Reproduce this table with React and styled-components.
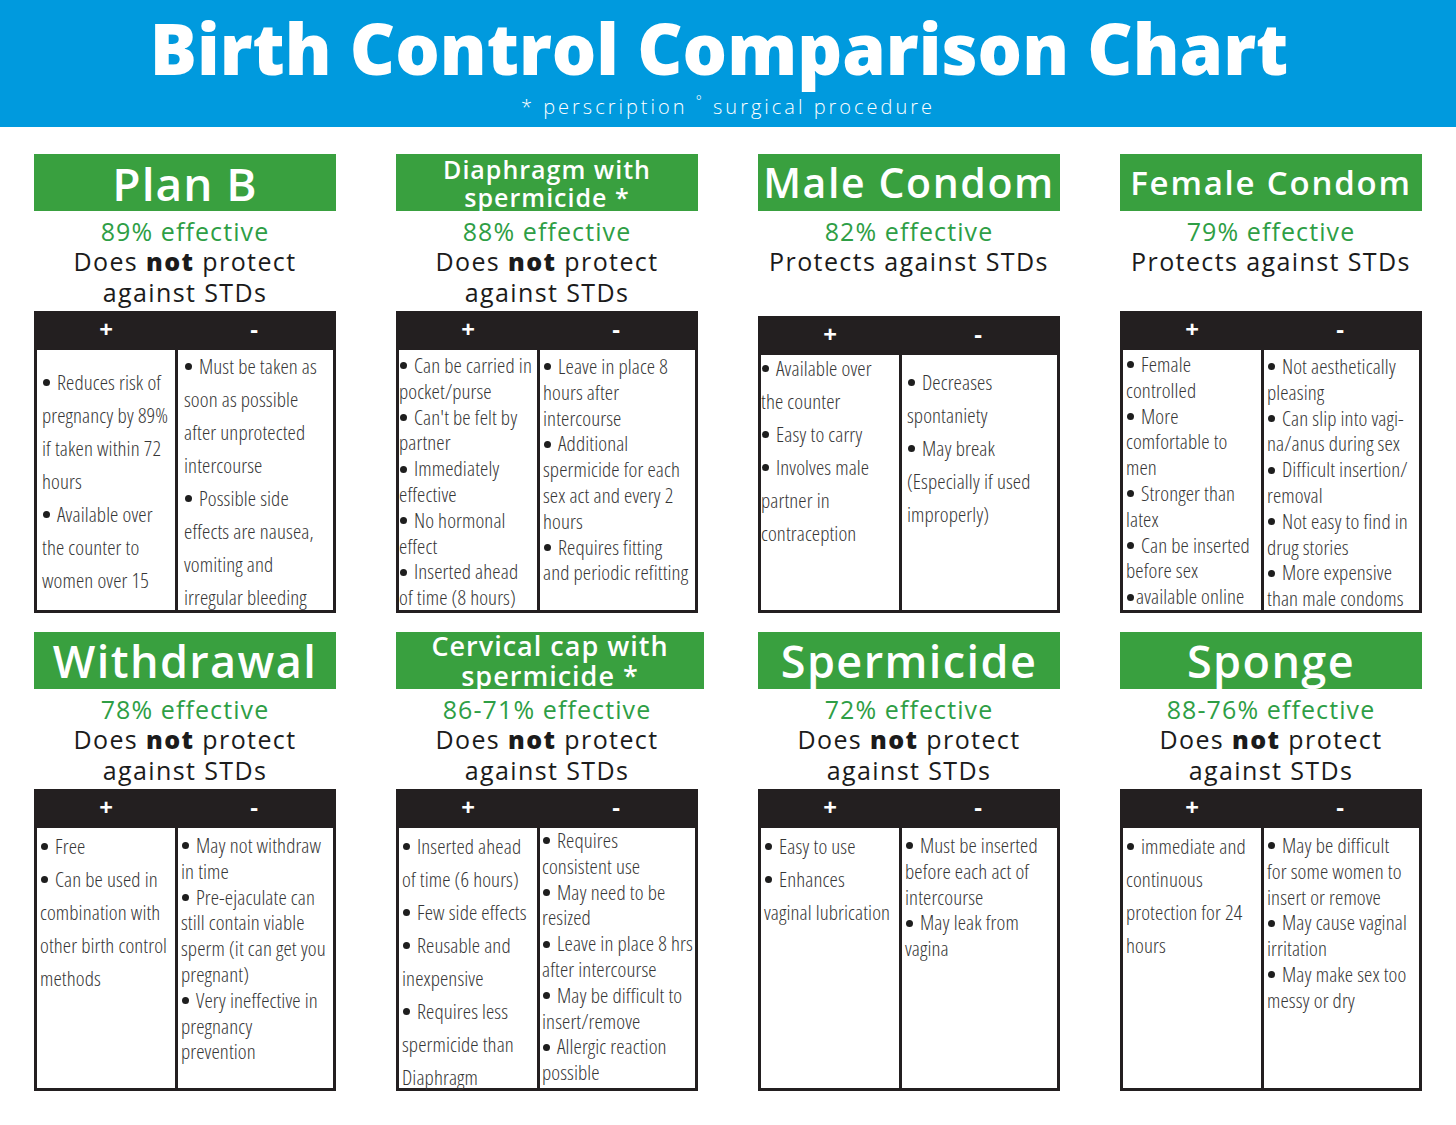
import styled, { createGlobalStyle } from 'styled-components'

const Global = createGlobalStyle`
  body {
    margin: 0;
    background: #ffffff;
    font-family: "Open Sans", "Liberation Sans", sans-serif;
  }
`

const Page = styled.div`
  width: 1456px;
  min-height: 1125px;
  background: #ffffff;
`

const Header = styled.header`
  height: 127px;
  background: #009ade;
  display: flex;
  flex-direction: column;
  align-items: center;
  color: #ffffff;
`

const Title = styled.h1`
  margin: 0 18px 0 0;
  font-size: 70px;
  line-height: 96px;
  font-weight: 800;
  letter-spacing: 0;
`

const Subtitle = styled.div`
  font-size: 20px;
  line-height: 22px;
  font-weight: 300;
  letter-spacing: 3px;

  sup {
    font-size: 14px;
    line-height: 0;
  }
`

const Grid = styled.main`
  display: grid;
  grid-template-columns: repeat(4, 302px);
  column-gap: 60px;
  row-gap: 19px;
  justify-content: center;
  padding-top: 27px;
`

const Card = styled.section`
  display: flex;
  flex-direction: column;
  height: 459px;
`

const TitleBar = styled.h2`
  margin: 0 ${p => p.$grow ? -6 : 0}px 0 0;
  height: 57px;
  flex: none;
  background: #39a03f;
  color: #ffffff;
  display: flex;
  align-items: center;
  justify-content: center;
  text-align: center;
  font-size: ${p => p.$size}px;
  line-height: ${p => p.$lh || p.$size}px;
  font-weight: 600;
  letter-spacing: ${p => p.$ls ?? 1}px;
`

const TitleText = styled.span`
  white-space: pre-line;
`

const Info = styled.div`
  height: 100px;
  flex: none;
  display: flex;
  flex-direction: column;
  align-items: center;
  padding-top: 5px;
  box-sizing: border-box;
`

const Effective = styled.div`
  color: #2e9e45;
  font-size: 25px;
  line-height: 30px;
  letter-spacing: 1.1px;
`

const Protect = styled.div`
  color: #1b1b1b;
  font-size: 25px;
  line-height: 31px;
  text-align: center;
  letter-spacing: 1.4px;
  white-space: pre-line;

  b {
    font-weight: 800;
  }
`

const Table = styled.div`
  flex: 1;
  margin-top: ${p => p.$offset || 0}px;
  display: flex;
  flex-direction: column;
  border: 3px solid #231f20;
  min-height: 0;
`

const TableHead = styled.div`
  height: 36px;
  flex: none;
  box-sizing: border-box;
  padding-bottom: 6px;
  background: #231f20;
  display: grid;
  grid-template-columns: 138px 1fr;
  align-items: center;
  color: #ffffff;
  font-size: 24px;
  line-height: 30px;
  font-weight: 700;
  text-align: center;
`

const TableBody = styled.div`
  flex: 1;
  min-height: 0;
  display: grid;
  grid-template-columns: 138px 1fr;
  grid-template-rows: minmax(0, 1fr);
  overflow: ${p => p.$clip ? 'hidden' : 'visible'};
`

const Column = styled.div`
  padding: ${p => p.$top || 0}px 0 0 ${p => p.$left ?? 3}px;
  margin-top: ${p => p.$shift || 0}px;
  font-family: "Open Sans", "Roboto Condensed", sans-serif;
  font-stretch: semi-condensed;
  font-weight: 300;
  font-size: 21px;
  letter-spacing: 0.1px;
  line-height: ${p => p.$loose ? 33 : 25.8}px;
  color: #363636;
  white-space: pre;

  & + & {
    border-left: 3px solid #231f20;
  }
`

const Item = styled.div``

const Bullet = styled.span`
  display: inline-block;
  width: 7px;
  height: 7px;
  border-radius: 50%;
  background: #1e1e1e;
  vertical-align: middle;
  margin: 0 ${p => p.$tight ? 2 : 7}px 3px 1px;
`

const methods = [
  {
    name: 'Plan B', size: 46, effective: '89% effective', protects: false, clip: true,
    plus: { loose: true, top: 16, left: 5, items: ['Reduces risk of\npregnancy by 89%\nif taken within 72\nhours', 'Available over\nthe counter to\nwomen over 15'] },
    minus: { loose: true, top: 0, left: 6, items: ['Must be taken as\nsoon as possible\nafter unprotected\nintercourse', 'Possible side\neffects are nausea,\nvomiting and\nirregular bleeding'] },
  },
  {
    name: 'Diaphragm with\nspermicide *', size: 25, lh: 28, effective: '88% effective', protects: false,
    plus: { top: 3, left: 0, items: ['Can be carried in\npocket/purse', "Can't be felt by\npartner", 'Immediately\neffective', 'No hormonal\neffect', 'Inserted ahead\nof time (8 hours)'] },
    minus: { top: 4, left: 3, items: ['Leave in place 8\nhours after\nintercourse', 'Additional\nspermicide for each\nsex act and every 2\nhours', 'Requires fitting\nand periodic refitting'] },
  },
  {
    name: 'Male Condom', size: 41, ls: 1.6, effective: '82% effective', protects: true, offset: 5,
    plus: { loose: true, shift: -3, left: 0, items: ['Available over\nthe counter', 'Easy to carry', 'Involves male\npartner in\ncontraception'] },
    minus: { loose: true, top: 11, left: 5, items: ['Decreases\nspontaniety', 'May break\n(Especially if used\nimproperly)'] },
  },
  {
    name: 'Female Condom', size: 33, ls: 1.8, effective: '79% effective', protects: true,
    plus: { top: 2, left: 3, items: ['Female\ncontrolled', 'More\ncomfortable to\nmen', 'Stronger than\nlatex', 'Can be inserted\nbefore sex', { text: 'available online', tight: true }] },
    minus: { top: 4, left: 3, items: ['Not aesthetically\npleasing', 'Can slip into vagi-\nna/anus during sex', 'Difficult insertion/\nremoval', 'Not easy to find in\ndrug stories', 'More expensive\nthan male condoms'] },
  },
  {
    name: 'Withdrawal', size: 45, ls: 1.4, effective: '78% effective', protects: false,
    plus: { loose: true, top: 2, items: ['Free', 'Can be used in\ncombination with\nother birth control\nmethods'] },
    minus: { top: 5, items: ['May not withdraw\nin time', 'Pre-ejaculate can\nstill contain viable\nsperm (it can get you\npregnant)', 'Very ineffective in\npregnancy\nprevention'] },
  },
  {
    name: 'Cervical cap with\nspermicide *', size: 27, lh: 30, grow: true, effective: '86-71% effective', protects: false,
    plus: { loose: true, top: 2, items: ['Inserted ahead\nof time (6 hours)', 'Few side effects', 'Reusable and\ninexpensive', 'Requires less\nspermicide than\nDiaphragm'] },
    minus: { top: 0, left: 2, items: ['Requires\nconsistent use', 'May need to be\nresized', 'Leave in place 8 hrs\nafter intercourse', 'May be difficult to\ninsert/remove', 'Allergic reaction\npossible'] },
  },
  {
    name: 'Spermicide', size: 45, ls: 1.4, effective: '72% effective', protects: false,
    plus: { loose: true, top: 2, items: ['Easy to use', 'Enhances\nvaginal lubrication'] },
    minus: { top: 5, items: ['Must be inserted\nbefore each act of\nintercourse', 'May leak from\nvagina'] },
  },
  {
    name: 'Sponge', size: 45, ls: 1.4, effective: '88-76% effective', protects: false,
    plus: { loose: true, top: 2, items: ['immediate and\ncontinuous\nprotection for 24\nhours'] },
    minus: { top: 5, items: ['May be difficult\nfor some women to\ninsert or remove', 'May cause vaginal\nirritation', 'May make sex too\nmessy or dry'] },
  },
]

function List({ col }) {
  return (
    <Column $loose={col.loose} $top={col.top} $left={col.left} $shift={col.shift}>
      {col.items.map((it, i) => {
        const text = typeof it === 'string' ? it : it.text
        const tight = typeof it !== 'string' && it.tight
        return (
          <Item key={i}>
            <Bullet $tight={tight} />
            {text}
          </Item>
        )
      })}
    </Column>
  )
}

function MethodCard({ m }) {
  return (
    <Card>
      <TitleBar $size={m.size} $lh={m.lh} $ls={m.ls} $grow={m.grow}>
        <TitleText>{m.name}</TitleText>
      </TitleBar>
      <Info>
        <Effective>{m.effective}</Effective>
        {m.protects ? (
          <Protect>Protects against STDs</Protect>
        ) : (
          <Protect>
            Does <b>not</b> protect{'\n'}against STDs
          </Protect>
        )}
      </Info>
      <Table $offset={m.offset}>
        <TableHead>
          <span>+</span>
          <span>-</span>
        </TableHead>
        <TableBody $clip={m.clip}>
          <List col={m.plus} />
          <List col={m.minus} />
        </TableBody>
      </Table>
    </Card>
  )
}

export default function App() {
  return (
    <>
      <Global />
      <Page>
        <Header>
          <Title>Birth Control Comparison Chart</Title>
          <Subtitle>
            * perscription <sup>°</sup> surgical procedure
          </Subtitle>
        </Header>
        <Grid>
          {methods.map(m => (
            <MethodCard key={m.name} m={m} />
          ))}
        </Grid>
      </Page>
    </>
  )
}
